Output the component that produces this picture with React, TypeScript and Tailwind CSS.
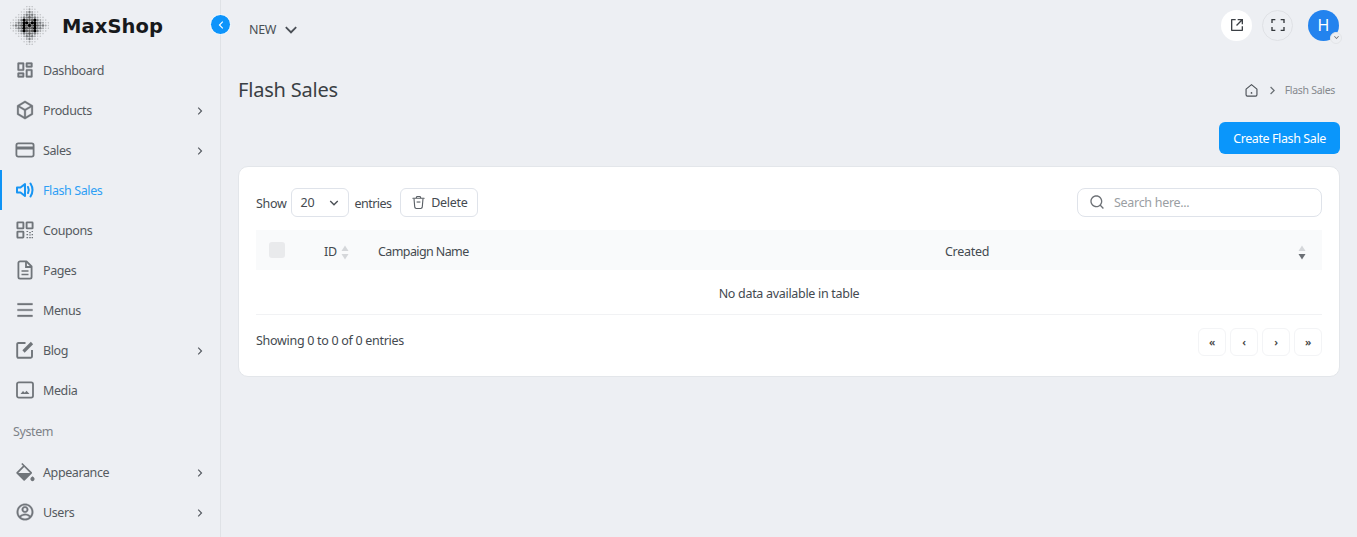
import React from "react";
import {
  RiDashboardLine,
  RiBox3Line,
  RiMenuLine,
  RiPaintFill,
  RiAccountCircleLine,
  RiShareBoxLine,
  RiFullscreenLine,
  RiSearchLine,
  RiArrowRightSLine,
  RiArrowLeftSLine,
  RiArrowDownSLine,
} from "react-icons/ri";

type IconProps = { className?: string };

const CardIcon = ({ className }: IconProps) => (
  <svg viewBox="0 0 20 20" fill="none" stroke="currentColor" strokeWidth="1.8" className={className}>
    <rect x="1.4" y="3.4" width="17.2" height="13.2" rx="1.8" />
    <path d="M1.5 8 H18.5" strokeWidth="3" />
  </svg>
);

const SpeakerIcon = ({ className }: IconProps) => (
  <svg viewBox="0 0 20 20" fill="none" stroke="currentColor" strokeWidth="2" className={className}>
    <path d="M2 7.5 H5.5 L10 4 V16 L5.5 12.5 H2 Z" strokeLinejoin="round" />
    <path d="M13 7 Q14.6 10 13 13" strokeLinecap="round" />
    <path d="M15.5 3.5 Q19.5 10 15.5 16.5" strokeLinecap="round" />
  </svg>
);

const QrIcon = ({ className }: IconProps) => (
  <svg viewBox="0 0 20 20" fill="none" stroke="currentColor" strokeWidth="1.9" className={className}>
    <rect x="2.4" y="2.4" width="6" height="6" rx="0.5" />
    <rect x="11.6" y="2.4" width="6" height="6" rx="0.5" />
    <rect x="2.4" y="11.6" width="6" height="6" rx="0.5" />
    <path d="M11.5 11.5 h1.6 M14.2 12.6 h1.6 M16.6 11.5 h1.4 M11.5 14.6 h1.6 M14.2 15 h1.6 M16.6 14.6 h1.4 M11.5 17.6 h1.6 M14.2 17.6 h1.6 M16.6 17.6 h1.4" strokeWidth="1.2" />
  </svg>
);

const PageIcon = ({ className }: IconProps) => (
  <svg viewBox="0 0 20 20" fill="none" stroke="currentColor" strokeWidth="1.8" className={className}>
    <path d="M3.4 3 A1.6 1.6 0 0 1 5 1.4 H11.5 L16.6 6.5 V17 A1.6 1.6 0 0 1 15 18.6 H5 A1.6 1.6 0 0 1 3.4 17 Z" strokeLinejoin="round" />
    <path d="M11 1.6 V7 H16.4" />
    <path d="M6.5 11 H13.5 M6.5 14.5 H13.5" strokeWidth="1.6" />
  </svg>
);

const BlogIcon = ({ className }: IconProps) => (
  <svg viewBox="0 0 20 20" fill="none" stroke="currentColor" strokeWidth="1.9" className={className}>
    <path d="M10.5 3 H3.5 A1.2 1.2 0 0 0 2.2 4.2 V16.6 A1.2 1.2 0 0 0 3.5 17.8 H15.8 A1.2 1.2 0 0 0 17 16.6 V10" />
    <path d="M8.5 11.5 L17 3" strokeWidth="3.2" />
  </svg>
);

const MediaIcon = ({ className }: IconProps) => (
  <svg viewBox="0 0 20 20" fill="none" stroke="currentColor" strokeWidth="1.8" className={className}>
    <rect x="2" y="2.4" width="16" height="15.2" rx="1.8" />
    <path d="M5.5 14 L8 11 L9.8 12.8 L11.5 10.8 L14.5 14 Z" fill="currentColor" stroke="none" />
  </svg>
);

const TrashIcon = ({ className }: IconProps) => (
  <svg viewBox="0 0 16 16" fill="none" stroke="currentColor" strokeWidth="1.2" className={className}>
    <path d="M2 3.5 H14 M5.5 3.3 L6.3 1.6 H9.7 L10.5 3.3" strokeLinecap="round" />
    <path d="M3.2 3.7 L4 13 A1.6 1.6 0 0 0 5.6 14.4 H10.4 A1.6 1.6 0 0 0 12 13 L12.8 3.7" />
    <path d="M6 7.5 H10" />
  </svg>
);

const HomeIcon = ({ className }: IconProps) => (
  <svg viewBox="0 0 16 16" fill="none" stroke="currentColor" strokeWidth="1.2" className={className}>
    <path d="M2.2 6.6 L8 1.8 L13.8 6.6 V12.6 A1.4 1.4 0 0 1 12.4 14 H3.6 A1.4 1.4 0 0 1 2.2 12.6 Z" strokeLinejoin="round" />
    <circle cx="8" cy="10.6" r="0.9" fill="currentColor" stroke="none" />
  </svg>
);

const thick = "stroke-current stroke-[0.35]";

const menuItems = [
  { label: "Dashboard", icon: RiDashboardLine, iconClass: thick },
  { label: "Products", icon: RiBox3Line, arrow: true, iconClass: thick },
  { label: "Sales", icon: CardIcon, arrow: true },
  { label: "Flash Sales", icon: SpeakerIcon, active: true },
  { label: "Coupons", icon: QrIcon },
  { label: "Pages", icon: PageIcon },
  { label: "Menus", icon: RiMenuLine, iconClass: thick },
  { label: "Blog", icon: BlogIcon, arrow: true },
  { label: "Media", icon: MediaIcon },
];

const systemItems = [
  { label: "Appearance", icon: RiPaintFill, arrow: true },
  { label: "Users", icon: RiAccountCircleLine, arrow: true, iconClass: thick },
];

type Item = { label: string; icon: React.ElementType; arrow?: boolean; active?: boolean; iconClass?: string };

const MenuRow = ({ item }: { item: Item }) => {
  const Icon = item.icon;
  return (
    <div
      className={`flex h-10 items-center border-l-2 pl-[13px] pr-[13px] ${
        item.active ? "border-[#0f93f5] text-[#2f9ff5]" : "border-transparent text-[#555a60]"
      }`}
    >
      <Icon
        className={`h-[20px] w-[20px] ${item.active ? "text-[#1795f3]" : "text-[#70757a]"} ${item.iconClass ?? ""}`}
      />
      <span className="ml-[8px] flex-1 pt-[2px] text-[12.5px] tracking-[-0.4px]">{item.label}</span>
      {item.arrow && <RiArrowRightSLine className="mt-[2px] h-[14px] w-[14px] text-[#555a60]" />}
    </div>
  );
};

// halftone diamond of the logo
const mShape = ["X...X", "XX.XX", "X.X.X", "X...X", "X...X"];

const LogoMark = () => {
  const dots = [];
  const step = 2.7;
  for (let y = 0; y < 15; y++) {
    for (let x = 0; x < 15; x++) {
      const d = Math.abs(x - 7) + Math.abs(y - 7);
      if (d > 8) continue;
      const my = y - 5;
      const mx = x - 5;
      const isM = my >= 0 && my < 5 && mx >= 0 && mx < 5 && mShape[my][mx] === "X";
      const r = isM ? 1.65 : d < 4 ? 1.35 : d < 6 ? 1.2 : d < 7 ? 1 : 0.8;
      const fill = isM ? "#000" : d < 4 ? "#5c5c5c" : d < 6 ? "#777a7d" : d < 7 ? "#a2a4a7" : "#c4c6c9";
      dots.push(<circle key={`${x}-${y}`} cx={0.6 + x * step} cy={0.6 + y * step} r={r} fill={fill} />);
    }
  }
  return (
    <svg viewBox="0 0 39 39" className="h-[39px] w-[39px]">
      {dots}
    </svg>
  );
};

const PageButton = ({ label }: { label: string }) => (
  <button className="flex h-7 w-7 items-center justify-center rounded-md border border-[#f3f4f6] bg-white text-[11px] font-semibold leading-none text-[#444]">
    {label}
  </button>
);

const SortArrows = ({ dark }: { dark?: boolean }) => (
  <svg viewBox="0 0 8 15" className="h-[15px] w-[8px]">
    <path d="M4 0.5 L7.5 6 H0.5 Z" fill="#d5d7da" />
    <path d="M4 14.5 L7.5 9 H0.5 Z" fill={dark ? "#6b6f75" : "#d5d7da"} />
  </svg>
);

export default function App() {
  return (
    <div
      className="flex h-[537px] w-full overflow-hidden bg-[#edeff3] text-[#444a50]"
      style={{ fontFamily: '"Noto Sans", "Open Sans", sans-serif' }}
    >
      <aside className="relative w-[221px] shrink-0 border-r border-[#dfe2e6]">
        <div className="flex h-[50px] items-center pl-[10px]">
          <LogoMark />
          <span
            className="ml-[13px] mt-[3px] text-[19.5px] font-bold leading-none tracking-[0.1px] text-[#17191c]"
            style={{ fontFamily: '"DejaVu Sans", sans-serif' }}
          >
            MaxShop
          </span>
        </div>
        <button className="absolute left-[210px] top-[14px] flex h-[21px] w-[21px] items-center justify-center rounded-full border border-white bg-[#0d94fb] text-white">
          <RiArrowLeftSLine className="h-[14px] w-[14px]" />
        </button>
        <nav>
          {menuItems.map((item) => (
            <MenuRow key={item.label} item={item} />
          ))}
          <div className="flex h-[42px] items-center pl-[13px] pt-[2px] text-[12.5px] tracking-[-0.4px] text-[#7d8288]">
            System
          </div>
          {systemItems.map((item) => (
            <MenuRow key={item.label} item={item} />
          ))}
        </nav>
      </aside>

      <div className="min-w-0 flex-1 pl-[17px] pr-[17px]">
        <header className="flex h-[58px] items-center pt-[1px]">
          <div className="ml-[11px] flex items-center pt-[1px] text-[12.5px] tracking-[-0.3px] text-[#4a4f55]">
            NEW
            <RiArrowDownSLine className="ml-[4px] h-[22px] w-[22px] text-[#4a4f55]" />
          </div>
          <div className="ml-auto flex items-center pb-[9px]">
            <button className="flex h-[31px] w-[31px] items-center justify-center rounded-full bg-white text-[#3c4045]">
              <RiShareBoxLine className="h-[16px] w-[16px]" />
            </button>
            <button className="ml-[10px] flex h-[31px] w-[31px] items-center justify-center rounded-full border border-[#dfe1e5] text-[#33373b]">
              <RiFullscreenLine className="h-[16px] w-[16px]" />
            </button>
            <div className="relative ml-[15px] mr-[1px] flex h-[31px] w-[31px] items-center justify-center rounded-full bg-[#2383ee] text-[16px] text-white">
              H
              <span className="absolute bottom-[-3px] right-[-3px] flex h-[12px] w-[12px] items-center justify-center rounded-full border border-[#e3e5e8] bg-[#edeff3] text-[#666]">
                <RiArrowDownSLine className="h-[9px] w-[9px]" />
              </span>
            </div>
          </div>
        </header>

        <div className="flex h-[64px] items-center justify-between">
          <h1 className="text-[20px] font-normal leading-none tracking-[-0.2px] text-[#3a3f44]">Flash Sales</h1>
          <div className="mr-[5px] flex items-center">
            <HomeIcon className="h-[15px] w-[15px] text-[#4a4f55]" />
            <RiArrowRightSLine className="ml-[6px] h-[15px] w-[15px] text-[#6b7075]" />
            <span className="ml-[5px] pt-[1px] text-[10.5px] tracking-[-0.3px] text-[#85898e]">Flash Sales</span>
          </div>
        </div>

        <div className="flex justify-end">
          <button className="flex h-[32px] w-[121px] items-center justify-center rounded-md bg-[#0a96fb] pt-[3px] text-[12.5px] tracking-[-0.4px] text-white">
            Create Flash Sale
          </button>
        </div>

        <section className="mt-[12px] h-[211px] rounded-[10px] border border-[#e3e6ea] bg-white px-[17px] pt-[20px] text-[12.5px] tracking-[-0.3px]">
          <div className="flex h-[30px] items-center">
            <span className="pt-[4px]">Show</span>
            <div className="ml-[4px] flex h-[29px] w-[58px] items-center justify-between rounded-md border border-[#dfe3ea] pl-[9px] pr-[6px] pt-[2px]">
              20
              <RiArrowDownSLine className="h-[16px] w-[16px] text-[#4a4f55]" />
            </div>
            <span className="ml-[6px] pt-[4px] tracking-[-0.55px]">entries</span>
            <button className="ml-[9px] flex h-[29px] w-[78px] items-center justify-center rounded-md border border-[#dfe3ea]">
              <TrashIcon className="h-[15px] w-[15px] text-[#5b6066]" />
              <span className="ml-[5px] pt-[3px]">Delete</span>
            </button>
            <div className="ml-auto flex h-[29px] w-[245px] items-center rounded-lg border border-[#dfe3ea] pl-[11px]">
              <RiSearchLine className="h-[16px] w-[16px] text-[#6d7176]" />
              <span className="ml-[9px] pt-[3px] text-[#9a9ea3]">Search here...</span>
            </div>
          </div>

          <table className="mt-[13px] w-full table-fixed border-collapse">
            <thead>
              <tr className="h-[40px] bg-[#f9fafb] text-left font-normal">
                <th className="w-[68px] pl-[13px] font-normal">
                  <div className="h-[16px] w-[16px] rounded-[3px] bg-[#e9eaec]" />
                </th>
                <th className="w-[54px] pt-[5px] font-normal">
                  <div className="flex items-center gap-[4px]">
                    ID <SortArrows />
                  </div>
                </th>
                <th className="w-[567px] pt-[5px] font-normal tracking-[-0.6px]">Campaign Name</th>
                <th className="pt-[5px] font-normal">Created</th>
                <th className="w-[24px] pt-[5px] font-normal">
                  <SortArrows dark />
                </th>
              </tr>
            </thead>
            <tbody>
              <tr className="h-[44px] border-b border-[#f1f2f4]">
                <td colSpan={5} className="pt-[5px] text-center">
                  No data available in table
                </td>
              </tr>
            </tbody>
          </table>

          <div className="mt-[13px] flex items-start justify-between">
            <span className="mt-[4px]">Showing 0 to 0 of 0 entries</span>
            <div className="flex gap-[4px]">
              <PageButton label="«" />
              <PageButton label="‹" />
              <PageButton label="›" />
              <PageButton label="»" />
            </div>
          </div>
        </section>
      </div>
    </div>
  );
}
